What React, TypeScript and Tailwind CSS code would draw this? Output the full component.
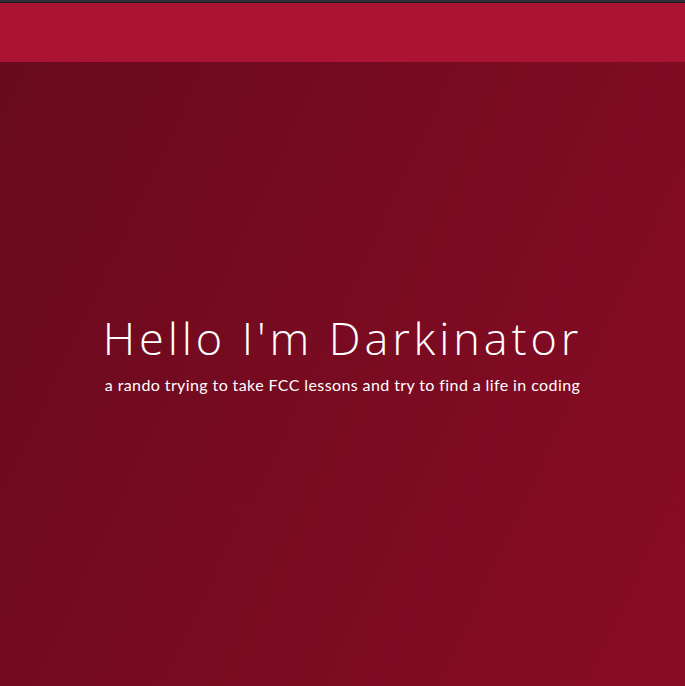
import React from "react";

const App: React.FC = () => {
  return (
    <div className="min-h-[686px] w-full flex flex-col bg-[#2e2e31]">
      <div className="h-[3px] w-full bg-[#303034] border-b border-[#1e1e20]" />
      <nav className="h-[59px] w-full bg-[#aa1432]" />
      <section className="flex-1 flex flex-col items-center justify-center pb-[42px] bg-[linear-gradient(115deg,#690a1d_0%,#880c25_100%)] text-white">
        <h1 className="font-['Open_Sans',sans-serif] font-light text-[45px] leading-[56px] tracking-[3.9px]">
          Hello I'm Darkinator
        </h1>
        <p className="mt-[8px] font-['Lato',sans-serif] text-[16px] leading-[22px] tracking-[0.4px]">
          a rando trying to take FCC lessons and try to find a life in coding
        </p>
      </section>
    </div>
  );
};

export default App;
